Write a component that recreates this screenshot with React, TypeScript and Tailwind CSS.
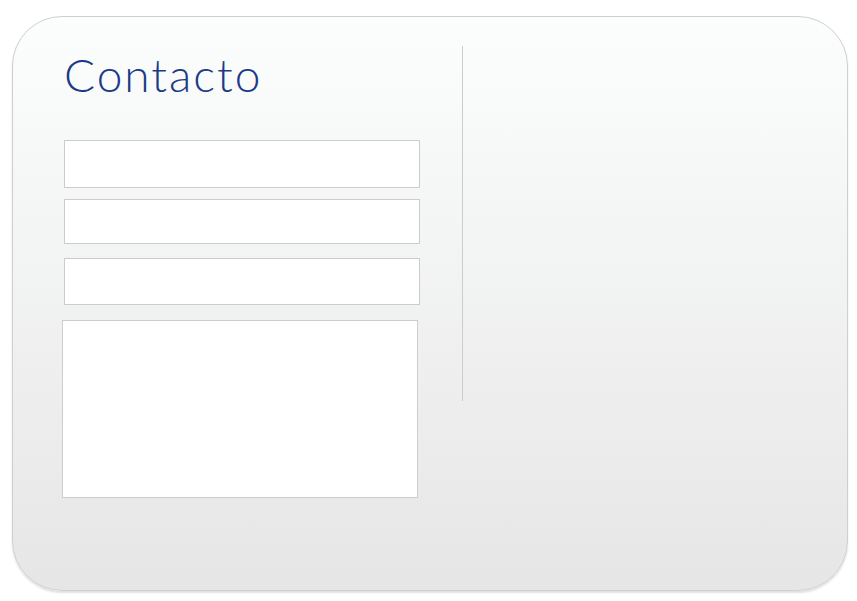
import React from 'react';

const Field: React.FC<{ className?: string }> = ({ className = '' }) => (
  <input
    type="text"
    className={`block bg-white border border-[#cccccc] outline-none ${className}`}
  />
);

const App: React.FC = () => {
  return (
    <div className="w-[857px] h-[601px] bg-white pt-[16px] pl-[12px]">
      {/* Card */}
      <div className="w-[836px] h-[575px] rounded-[50px] border border-[#cfcfcf] bg-gradient-to-b from-[#fcfdfd] to-[#e6e6e6] shadow-[0_2px_2px_rgba(0,0,0,0.12)] flex">
        {/* Form column */}
        <div className="w-[449px] pl-[51px] pt-[29px]">
          <h1
            className="text-[46px] leading-[58px] font-light text-[#1c3a87] tracking-[2px]"
            style={{ fontFamily: 'Lato, sans-serif' }}
          >
            Contacto
          </h1>
          <div className="mt-[36px]">
            <Field className="w-[356px] h-[48px]" />
            <Field className="w-[356px] h-[45px] mt-[11px]" />
            <Field className="w-[356px] h-[47px] mt-[14px]" />
            <textarea className="block w-[356px] h-[178px] mt-[15px] -ml-[2px] bg-white border border-[#cccccc] outline-none resize-none" />
          </div>
        </div>
        {/* Divider */}
        <div className="w-px h-[355px] mt-[29px] bg-[#cccccc]" />
      </div>
    </div>
  );
};

export default App;
